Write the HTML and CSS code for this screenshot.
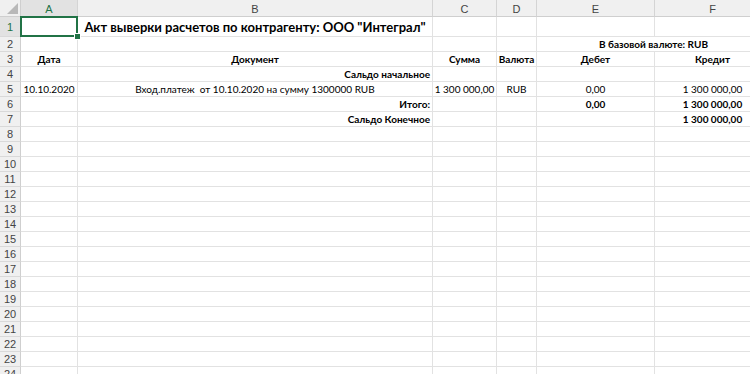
FILE: index.html
```html
<!DOCTYPE html>
<html lang="ru">
<head>
<meta charset="utf-8">
<title>Акт выверки</title>
<link rel="stylesheet" href="styles.css">
</head>
<body>
<div class="sheet">
  <div class="corner"><svg width="20" height="16" viewBox="0 0 20 16"><polygon points="7,14 18,14 18,3" fill="#b8b8b8"/></svg></div>
  <div class="ch sel">A</div><div class="ch">B</div><div class="ch">C</div><div class="ch">D</div><div class="ch">E</div><div class="ch">F</div>

  <div class="rh sel">1</div><div class="c a1"></div><div class="c title">Акт выверки расчетов по контрагенту: ООО "Интеграл"</div><div class="c"></div><div class="c"></div><div class="c"></div><div class="c"></div>

  <div class="rh">2</div><div class="c"></div><div class="c"></div><div class="c"></div><div class="c"></div><div class="c span2 b">В базовой валюте: RUB</div>

  <div class="rh">3</div><div class="c b">Дата</div><div class="c b">Документ</div><div class="c b">Сумма</div><div class="c b">Валюта</div><div class="c b">Дебет</div><div class="c b">Кредит</div>

  <div class="rh">4</div><div class="c"></div><div class="c b r">Сальдо начальное</div><div class="c"></div><div class="c"></div><div class="c"></div><div class="c"></div>

  <div class="rh">5</div><div class="c">10.10.2020</div><div class="c">Вход.платеж&nbsp; от 10.10.2020 на сумму 1300000 RUB</div><div class="c">1 300 000,00</div><div class="c">RUB</div><div class="c">0,00</div><div class="c">1 300 000,00</div>

  <div class="rh">6</div><div class="c"></div><div class="c b r">Итого:</div><div class="c"></div><div class="c"></div><div class="c b">0,00</div><div class="c b">1 300 000,00</div>

  <div class="rh">7</div><div class="c"></div><div class="c b r">Сальдо Конечное</div><div class="c"></div><div class="c"></div><div class="c"></div><div class="c b">1 300 000,00</div>

  <div class="rh">8</div><div class="c"></div><div class="c"></div><div class="c"></div><div class="c"></div><div class="c"></div><div class="c"></div>
  <div class="rh">9</div><div class="c"></div><div class="c"></div><div class="c"></div><div class="c"></div><div class="c"></div><div class="c"></div>
  <div class="rh">10</div><div class="c"></div><div class="c"></div><div class="c"></div><div class="c"></div><div class="c"></div><div class="c"></div>
  <div class="rh">11</div><div class="c"></div><div class="c"></div><div class="c"></div><div class="c"></div><div class="c"></div><div class="c"></div>
  <div class="rh">12</div><div class="c"></div><div class="c"></div><div class="c"></div><div class="c"></div><div class="c"></div><div class="c"></div>
  <div class="rh">13</div><div class="c"></div><div class="c"></div><div class="c"></div><div class="c"></div><div class="c"></div><div class="c"></div>
  <div class="rh">14</div><div class="c"></div><div class="c"></div><div class="c"></div><div class="c"></div><div class="c"></div><div class="c"></div>
  <div class="rh">15</div><div class="c"></div><div class="c"></div><div class="c"></div><div class="c"></div><div class="c"></div><div class="c"></div>
  <div class="rh">16</div><div class="c"></div><div class="c"></div><div class="c"></div><div class="c"></div><div class="c"></div><div class="c"></div>
  <div class="rh">17</div><div class="c"></div><div class="c"></div><div class="c"></div><div class="c"></div><div class="c"></div><div class="c"></div>
  <div class="rh">18</div><div class="c"></div><div class="c"></div><div class="c"></div><div class="c"></div><div class="c"></div><div class="c"></div>
  <div class="rh">19</div><div class="c"></div><div class="c"></div><div class="c"></div><div class="c"></div><div class="c"></div><div class="c"></div>
  <div class="rh">20</div><div class="c"></div><div class="c"></div><div class="c"></div><div class="c"></div><div class="c"></div><div class="c"></div>
  <div class="rh">21</div><div class="c"></div><div class="c"></div><div class="c"></div><div class="c"></div><div class="c"></div><div class="c"></div>
  <div class="rh">22</div><div class="c"></div><div class="c"></div><div class="c"></div><div class="c"></div><div class="c"></div><div class="c"></div>
  <div class="rh">23</div><div class="c"></div><div class="c"></div><div class="c"></div><div class="c"></div><div class="c"></div><div class="c"></div>
  <div class="rh">24</div><div class="c"></div><div class="c"></div><div class="c"></div><div class="c"></div><div class="c"></div><div class="c"></div>
</div>
</body>
</html>
```

FILE: styles.css
```css
html, body {
  margin: 0;
  padding: 0;
  background: #fff;
  overflow: hidden;
}
body {
  width: 750px;
  height: 374px;
  font-family: Lato, "Open Sans", sans-serif;
  font-size: 10px;
  color: #000;
}
.sheet {
  display: grid;
  grid-template-columns: 21px 57px 355px 64px 40px 118px 116px;
  grid-template-rows: 17px 20px repeat(23, 15px);
  width: 771px;
}
.sheet > div {
  box-sizing: border-box;
  display: flex;
  align-items: center;
  justify-content: center;
  white-space: nowrap;
  overflow: hidden;
}
.corner {
  background: #f0f0f0;
  border-right: 1px solid #cfcfcf;
  border-bottom: 1px solid #cfcfcf;
  align-items: flex-start !important;
  justify-content: flex-start !important;
}
.corner svg { display: block; }
.ch {
  background: #f0f0f0;
  color: #444;
  font-family: "Liberation Sans", Arial, sans-serif;
  font-size: 11px;
  border-right: 1px solid #d4d4d4;
  border-bottom: 1px solid #cfcfcf;
  padding-top: 1px;
}
.rh {
  background: #f0f0f0;
  color: #444;
  font-family: "Liberation Sans", Arial, sans-serif;
  font-size: 11px;
  border-right: 1px solid #cfcfcf;
  border-bottom: 1px solid #d9d9d9;
}
.ch.sel {
  background: #e2e2e2;
  color: #217346;
  border-bottom: 1px solid #217346;
}
.rh.sel {
  background: #e2e2e2;
  color: #217346;
  border-right: 1px solid #217346;
}
.c {
  border-right: 1px solid #e2e2e2;
  border-bottom: 1px solid #e2e2e2;
  padding: 0 2px;
}
.b { font-weight: bold; }
.r { justify-content: flex-end !important; }
.span2 { grid-column: span 2; }
.title {
  font-weight: bold;
  font-size: 13px;
}
.a1 {
  position: relative;
  overflow: visible !important;
}
.a1::before {
  content: "";
  position: absolute;
  left: -1px;
  top: -1px;
  right: -1px;
  bottom: -1px;
  border: 2px solid #217346;
}
.a1::after {
  content: "";
  position: absolute;
  right: -4px;
  bottom: -4px;
  width: 5px;
  height: 5px;
  background: #217346;
  border: 1px solid #fff;
  z-index: 2;
}
```
